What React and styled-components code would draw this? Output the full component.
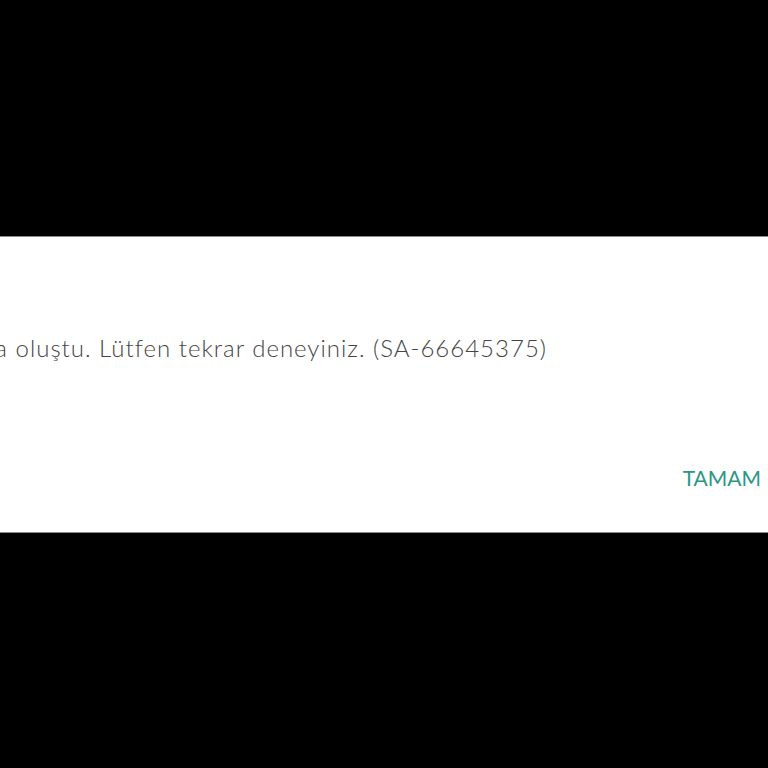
import React from 'react';
import styled, { createGlobalStyle } from 'styled-components';

const GlobalStyle = createGlobalStyle`
    html, body {
        margin: 0;
        padding: 0;
        background: #000000;
    }
    #root {
        height: 100vh;
    }
`;

const Overlay = styled.div`
    height: 100vh;
    width: 100%;
    overflow: hidden;
    display: flex;
    align-items: center;
    justify-content: flex-end;
`;

const Dialog = styled.div`
    flex: none;
    width: 1200px;
    height: 297px;
    box-sizing: border-box;
    background: #ffffff;
    border-top: 1px solid #8a8a8a;
    border-bottom: 1px solid #8a8a8a;
    display: flex;
    flex-direction: column;
    align-items: flex-end;
    padding: 96px 7px 0 0;
`;

const Message = styled.p`
    margin: 0 214px 0 0;
    font-family: "Lato", "Noto Sans", sans-serif;
    font-weight: 300;
    font-size: 24px;
    letter-spacing: 1px;
    line-height: 30px;
    color: #444444;
    white-space: nowrap;
`;

const Actions = styled.div`
    margin-top: 100px;
    display: flex;
    justify-content: flex-end;
`;

const TextButton = styled.button`
    border: none;
    background: transparent;
    padding: 0;
    font-family: "Lato", "Noto Sans", sans-serif;
    font-size: 21px;
    line-height: 30px;
    color: #2b9684;
    cursor: pointer;
`;

const App = () => {
    return (
        <>
            <GlobalStyle />
            <Overlay>
                <Dialog>
                    <Message>Bir hata oluştu. Lütfen tekrar deneyiniz. (SA-66645375)</Message>
                    <Actions>
                        <TextButton>TAMAM</TextButton>
                    </Actions>
                </Dialog>
            </Overlay>
        </>
    );
};

export default App;
